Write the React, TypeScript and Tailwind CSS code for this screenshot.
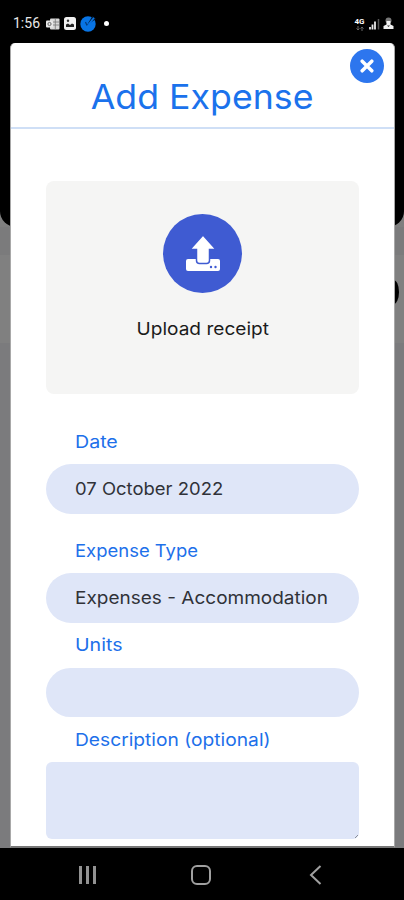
import React from "react";

function StatusBar() {
  return (
    <header className="flex h-[43px] shrink-0 items-start justify-between pl-[13px] pr-[10px] pt-[15px] text-white">
      <div className="flex h-[17px] items-center">
        <span className="w-[33px] whitespace-nowrap font-[Roboto,sans-serif] text-[14px] leading-[17px] text-[#e8e8e8]">1:56</span>
        <svg className="block" width="14" height="12" viewBox="0 0 14 12">
          <rect x="4" y="0.5" width="9.5" height="11" rx="1" fill="#d8d8d8" />
          <path d="M6 4h7M6 7h7M9.3 1v10" stroke="#777" strokeWidth="0.8" />
          <rect x="0" y="2.5" width="7" height="7" rx="1" fill="#e8e8e8" />
          <circle cx="3.5" cy="6" r="1.6" fill="none" stroke="#666" strokeWidth="1" />
        </svg>
        <svg className="ml-[4px] block" width="12" height="13" viewBox="0 0 12 13">
          <rect width="12" height="13" rx="2.5" fill="#f0f0f0" />
          <path d="M2 10V7.500l2-1 2 1.500 2-1.500 2 1V10z" fill="#222" />
          <circle cx="4" cy="3.800" r="1.200" fill="#333" />
        </svg>
        <svg className="ml-[4px] block" width="16" height="16" viewBox="0 0 16 16">
          <circle cx="8" cy="8" r="7.700" fill="#0874e4" />
          <path d="M7 9L12.500 0L16 3z" fill="#04182f" />
          <path d="M8.500 8.500L14 1.800" stroke="#0874e4" strokeWidth="1.800" />
          <path d="M5.500 6L7 9.500" stroke="#063a78" strokeWidth="1.200" />
        </svg>
        <span className="ml-[8px] size-[5px] rounded-full bg-white" />
      </div>
      <div className="flex h-[17px] items-center">
        <div className="flex w-[11px] flex-col items-center font-[Roboto,sans-serif] font-bold leading-none">
          <span className="text-[8px] leading-[9px]">4G</span>
          <svg className="block" width="8" height="5" viewBox="0 0 8 5">
            <path d="M2 0v4M.5 2.500L2 4l1.500-1.500M6 5V1M4.500 2.500L6 1l1.500 1.500" fill="none" stroke="#666" strokeWidth="1" />
          </svg>
        </div>
        <svg className="ml-[4px] block" width="11" height="12" viewBox="0 0 11 12">
          <path d="M1 11.500V9M3.500 11.500V6.500M6 11.500V3.500" stroke="#e8e8e8" strokeWidth="1.800" />
          <path d="M9.500 11.500V1" stroke="#555" strokeWidth="1.500" />
        </svg>
        <svg className="ml-[3px] block" width="11" height="13" viewBox="0 0 11 13">
          <circle cx="5.500" cy="3.500" r="3" fill="#777" />
          <path d="M3.500 4h4v3.500L10.500 9v3H.5V9l3-1.500z" fill="#f0f0f0" />
          <path d="M4 8.500h3L5.500 10z" fill="#333" />
        </svg>
      </div>
    </header>
  );
}

function Label({ children, scale }: { children: string; scale: string }) {
  return (
    <label className={`relative top-px block w-max origin-left whitespace-nowrap text-[17.500px] leading-[24px] text-[#1d70ea] ${scale}`}>
      {children}
    </label>
  );
}

export default function App() {
  return (
    <div className="relative flex h-[900px] w-[404px] flex-col overflow-hidden bg-black font-[Inter,sans-serif]">
      <StatusBar />
      <div className="flex h-[805px] shrink-0 flex-col bg-[#7f7f7f]">
        <div className="h-[168px] bg-black" />
        <div className="h-[16px] rounded-b-[16px] bg-black" />
        <div className="h-[28px] bg-[#7b7b7c]" />
        <div className="h-[88px] bg-[#808080]" />
        <div className="flex-1 bg-[#7b7b7d]" />
      </div>
      <span className="absolute left-[388px] top-[280px] h-[24px] w-[11px] rounded-[50%] bg-black" />

      <section className="absolute left-[10px] top-[43px] flex h-[805px] w-[385px] flex-col rounded-t-[5px] border border-b-2 border-t-0 border-[#a8a8a8] border-b-[#777] bg-white">
        <div className="flex h-[86px] shrink-0 items-start justify-center border-b-2 border-[#cfdff6] pt-[33px]">
          <h1 className="origin-center scale-x-[1.050] whitespace-nowrap text-[34px] leading-[42px] text-[#1b72ec]">Add Expense</h1>
        </div>
        <button className="absolute right-[10px] top-[6px] flex size-[34px] items-center justify-center rounded-full bg-[#2d76ee]" aria-label="Close">
          <svg width="14" height="14" viewBox="0 0 14 14">
            <path d="M2.200 2.200l9.600 9.600M11.800 2.200l-9.600 9.600" stroke="#fff" strokeWidth="3.500" strokeLinecap="round" />
          </svg>
        </button>

        <div className="flex flex-col px-[35px] pt-[52px]">
          <div className="flex h-[213px] flex-col items-center rounded-[8px] bg-[#f5f5f4] pt-[33px]">
            <div className="flex size-[79px] items-center justify-center rounded-full bg-[#3f5bd2]">
              <svg width="36" height="37" viewBox="0 0 36 37">
                <path d="M3 24h30q2 0 2 2v8q0 2-2 2H3q-2 0-2-2v-8q0-2 2-2z" fill="#fff" />
                <path d="M18 0L31 14.500H24.500v11q0 3-3 3h-7q-3 0-3-3v-11H5z" fill="#fff" stroke="#3f5bd2" strokeWidth="1.500" />
                <circle cx="26" cy="32" r="1.200" fill="#3f5bd2" />
                <circle cx="30.500" cy="32" r="1.200" fill="#3f5bd2" />
              </svg>
            </div>
            <span className="mt-[24px] scale-x-[1.090] whitespace-nowrap text-[17.500px] leading-[24px] text-[#1b1b1b]">Upload receipt</span>
          </div>

          <div className="mt-[35px] pl-[29px]"><Label scale="scale-x-[1.120]">Date</Label></div>
          <div className="mt-[11px] flex h-[50px] items-center rounded-full bg-[#dfe6f8] pl-[29px]">
            <span className="origin-left scale-x-[1.055] whitespace-nowrap text-[17.500px] leading-[24px] text-[#303238]">07 October 2022</span>
          </div>

          <div className="mt-[24px] pl-[29px]"><Label scale="scale-x-[1.055]">Expense Type</Label></div>
          <div className="mt-[11px] flex h-[50px] items-center rounded-full bg-[#dfe6f8] pl-[29px]">
            <span className="origin-left scale-x-[1.086] whitespace-nowrap text-[17.500px] leading-[24px] text-[#303238]">Expenses - Accommodation</span>
          </div>

          <div className="mt-[9px] pl-[29px]"><Label scale="scale-x-[1.120]">Units</Label></div>
          <div className="mt-[12px] h-[49px] rounded-full bg-[#dfe6f8]" />

          <div className="mt-[10px] pl-[29px]"><Label scale="scale-x-[1.097]">Description (optional)</Label></div>
          <div className="mt-[11px] flex h-[77px] items-end justify-end rounded-[6px] bg-[#dfe6f8]">
            <svg className="m-[1px]" width="3" height="3" viewBox="0 0 3 3">
              <path d="M0 3L3 0" stroke="#8a8e98" strokeWidth="1" />
            </svg>
          </div>
        </div>
      </section>

      <nav className="flex h-[52px] shrink-0 items-center pl-[79px] pt-px">
        <div className="flex gap-[4px]">
          <span className="h-[18px] w-[3px] bg-[#929292]" />
          <span className="h-[18px] w-[3px] bg-[#929292]" />
          <span className="h-[18px] w-[3px] bg-[#929292]" />
        </div>
        <span className="ml-[95px] size-[20px] rounded-[6px] border-2 border-[#a0a0a0]" />
        <svg className="ml-[98px]" width="13" height="20" viewBox="0 0 13 20">
          <path d="M11.500 1L2 10l9.500 9" fill="none" stroke="#a0a0a0" strokeWidth="2" />
        </svg>
      </nav>
    </div>
  );
}
